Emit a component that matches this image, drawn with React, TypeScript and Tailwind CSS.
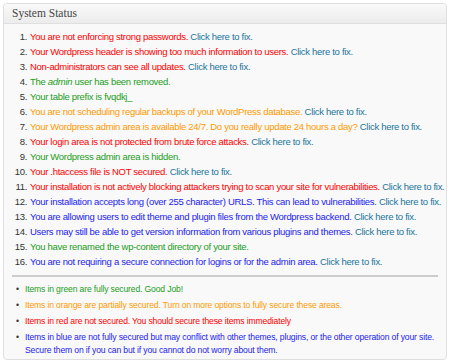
const RED = "text-[#ff0000]";
const ORANGE = "text-[#ff9900]";
const GREEN = "text-[#239d23]";
const BLUE = "text-[#1c1cf0]";

type Item = { text: React.ReactNode; color: string; fix?: boolean };

const items: Item[] = [
  { text: "You are not enforcing strong passwords.", color: RED, fix: true },
  { text: "Your Wordpress header is showing too much information to users.", color: RED, fix: true },
  { text: "Non-administrators can see all updates.", color: RED, fix: true },
  {
    text: (
      <>
        The <em>admin</em> user has been removed.
      </>
    ),
    color: GREEN,
  },
  { text: "Your table prefix is fvqdkj_", color: GREEN },
  { text: "You are not scheduling regular backups of your WordPress database.", color: ORANGE, fix: true },
  { text: "Your Wordpress admin area is available 24/7. Do you really update 24 hours a day?", color: ORANGE, fix: true },
  { text: "Your login area is not protected from brute force attacks.", color: RED, fix: true },
  { text: "Your Wordpress admin area is hidden.", color: GREEN },
  { text: "Your .htaccess file is NOT secured.", color: RED, fix: true },
  { text: "Your installation is not actively blocking attackers trying to scan your site for vulnerabilities.", color: RED, fix: true },
  { text: "Your installation accepts long (over 255 character) URLS. This can lead to vulnerabilities.", color: BLUE, fix: true },
  { text: "You are allowing users to edit theme and plugin files from the Wordpress backend.", color: BLUE, fix: true },
  { text: "Users may still be able to get version information from various plugins and themes.", color: BLUE, fix: true },
  { text: "You have renamed the wp-content directory of your site.", color: GREEN },
  { text: "You are not requiring a secure connection for logins or for the admin area.", color: BLUE, fix: true },
];

const legend = [
  { color: GREEN, lines: ["Items in green are fully secured. Good Job!"] },
  { color: ORANGE, lines: ["Items in orange are partially secured. Turn on more options to fully secure these areas."] },
  { color: RED, lines: ["Items in red are not secured. You should secure these items immediately"] },
  {
    color: BLUE,
    lines: [
      "Items in blue are not fully secured but may conflict with other themes, plugins, or the other operation of your site.",
      "Secure them on if you can but if you cannot do not worry about them.",
    ],
  },
];

export default function App() {
  return (
    <div className="w-[450px] h-[363px] bg-white p-[3px]" style={{ fontFamily: '"Liberation Sans", Arial, sans-serif' }}>
      <div className="h-[357px] border border-[#dfdfdf] rounded-[4px] bg-[#f9f9f9] overflow-hidden">
        {/* Header */}
        <div className="h-[20px] border-b border-[#dfdfdf] bg-gradient-to-b from-[#f9f9f9] to-[#ececec] px-[8px] flex items-center">
          <h3
            className="text-[11.5px] text-[#464646]"
            style={{ fontFamily: '"Liberation Serif", Georgia, serif' }}
          >
            System Status
          </h3>
        </div>

        {/* Status list */}
        <ol className="pl-[9px] pt-[5px] text-[9.5px] leading-[15px] tracking-[-0.3px]">
          {items.map((item, i) => (
            <li key={i} className="flex">
              <span className="w-[14px] text-right text-[#333] shrink-0 mr-[3px]">{i + 1}.</span>
              <span className="whitespace-nowrap">
                <span className={item.color}>{item.text}</span>
                {item.fix && <span className="text-[#21759b]"> Click here to fix.</span>}
              </span>
            </li>
          ))}
        </ol>

        <div className="mx-[8px] mt-[6px] h-[2px] bg-[#cccccc]" />

        {/* Legend */}
        <ul className="pl-[12px] pt-[6px] text-[8.6px] leading-[13px] tracking-[-0.15px]">
          {legend.map((l, i) => (
            <li key={i} className={`flex ${l.color} mb-[3px]`}>
              <span className="w-[9px] text-[#333] shrink-0">•</span>
              <span className="whitespace-nowrap">
                {l.lines.map((line, j) => (
                  <span key={j} className="block">
                    {line}
                  </span>
                ))}
              </span>
            </li>
          ))}
        </ul>
      </div>
    </div>
  );
}
